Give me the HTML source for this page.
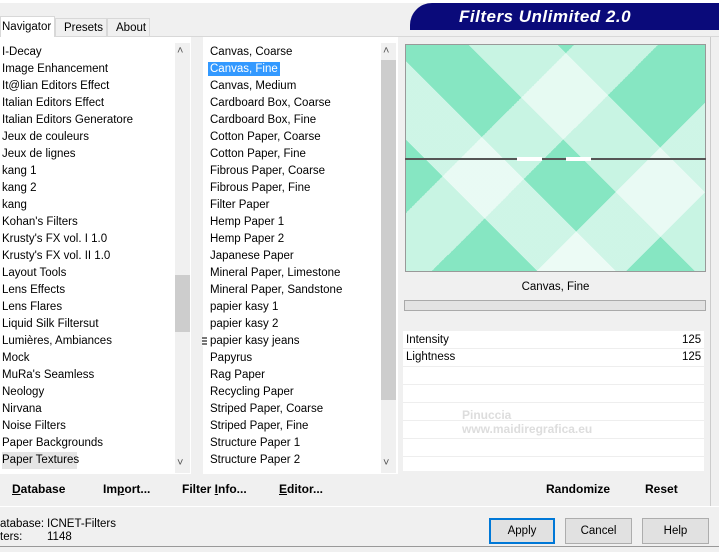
<!DOCTYPE html><html><head><style>
*{margin:0;padding:0;box-sizing:border-box}
body{width:719px;height:552px;background:#f0f0f0;font-family:"Liberation Sans",sans-serif;font-size:11.5px;color:#000;position:relative;overflow:hidden}
.a{position:absolute}
.list div{height:17px;line-height:17px;white-space:nowrap}
.sb{background:#f0f0f0}
.btn{font-weight:bold;font-size:12px}
</style></head><body>
<div class="a" style="left:0;top:0;width:719px;height:3px;background:#fff"></div>
<div class="a" style="left:410px;top:3px;width:309px;height:27px;background:#0a0a7a;border-radius:22px 0 0 0"></div>
<div class="a" style="left:459px;top:7px;color:#fff;font-weight:bold;font-style:italic;font-size:17px;letter-spacing:0.5px">Filters Unlimited 2.0</div>
<div class="a" style="left:0;top:36px;width:719px;height:1px;background:#d8d8d8"></div>
<div class="a" style="left:0;top:16px;width:55px;height:21px;background:#fff;border:1px solid #d8d8d8;border-bottom:none;padding:4px 0 0 1px">Navigator</div>
<div class="a" style="left:55px;top:18px;width:52px;height:19px;border:1px solid #d8d8d8;padding:3px 0 0 8px">Presets</div>
<div class="a" style="left:107px;top:18px;width:43px;height:19px;border:1px solid #d8d8d8;padding:3px 0 0 8px">About</div>
<div class="a" style="left:0;top:37px;width:719px;height:510px;background:#f0f0f0;border-bottom:1px solid #999"></div>
<div class="a" style="left:0;top:37px;width:398px;height:437px;background:#fff"></div>
<div class="a" style="left:191px;top:37px;width:12px;height:437px;background:#f0f0f0"></div>
<div class="a list" style="left:2px;top:44px">
<div>I-Decay</div><div>Image Enhancement</div><div>It@lian Editors Effect</div><div>Italian Editors Effect</div><div>Italian Editors Generatore</div><div>Jeux de couleurs</div><div>Jeux de lignes</div><div>kang 1</div><div>kang 2</div><div>kang</div><div>Kohan's Filters</div><div>Krusty's FX vol. I 1.0</div><div>Krusty's FX vol. II 1.0</div><div>Layout Tools</div><div>Lens Effects</div><div>Lens Flares</div><div>Liquid Silk Filtersut</div><div>Lumières, Ambiances</div><div>Mock</div><div>MuRa's Seamless</div><div>Neology</div><div>Nirvana</div><div>Noise Filters</div><div>Paper Backgrounds</div><div style="background:#e5e5e5;width:75px">Paper Textures</div>
</div>
<div class="a sb" style="left:175px;top:43px;width:15px;height:430px"></div>
<div class="a" style="left:175px;top:275px;width:15px;height:57px;background:#cdcdcd"></div>
<div class="a" style="left:177px;top:45px;font-size:11px;color:#555">˄</div>
<div class="a" style="left:177px;top:457px;font-size:11px;color:#555">˅</div>
<div class="a list" style="left:210px;top:44px">
<div>Canvas, Coarse</div><div><span style="background:#3399ff;color:#fff;padding:1px 2px;margin-left:-2px">Canvas, Fine</span></div><div>Canvas, Medium</div><div>Cardboard Box, Coarse</div><div>Cardboard Box, Fine</div><div>Cotton Paper, Coarse</div><div>Cotton Paper, Fine</div><div>Fibrous Paper, Coarse</div><div>Fibrous Paper, Fine</div><div>Filter Paper</div><div>Hemp Paper 1</div><div>Hemp Paper 2</div><div>Japanese Paper</div><div>Mineral Paper, Limestone</div><div>Mineral Paper, Sandstone</div><div>papier kasy 1</div><div>papier kasy 2</div><div>papier kasy jeans</div><div>Papyrus</div><div>Rag Paper</div><div>Recycling Paper</div><div>Striped Paper, Coarse</div><div>Striped Paper, Fine</div><div>Structure Paper 1</div><div>Structure Paper 2</div>
</div>
<div class="a" style="left:202px;top:337px;width:5px;height:9px;background:repeating-linear-gradient(#777 0 2px,#fff 2px 3px)"></div>
<div class="a sb" style="left:381px;top:43px;width:15px;height:430px"></div>
<div class="a" style="left:381px;top:60px;width:15px;height:340px;background:#cdcdcd"></div>
<div class="a" style="left:383px;top:45px;font-size:11px;color:#555">˄</div>
<div class="a" style="left:383px;top:457px;font-size:11px;color:#555">˅</div>
<div class="a" style="left:405px;top:44px;width:301px;height:228px;border:1px solid #999;background:
linear-gradient(45deg,transparent 25%,rgba(255,255,255,.6) 25% 40%,transparent 40% 55%,rgba(255,255,255,.55) 55% 72%,transparent 72%),
linear-gradient(-45deg,transparent 15%,rgba(255,255,255,.6) 15% 32%,transparent 32% 52%,rgba(255,255,255,.55) 52% 68%,transparent 68%),
#86e6c2"></div>
<div class="a" style="left:405px;top:158px;width:301px;height:2px;background:#555"></div>
<div class="a" style="left:517px;top:157px;width:25px;height:4px;background:#fff"></div>
<div class="a" style="left:566px;top:157px;width:25px;height:4px;background:#fff"></div>
<div class="a" style="left:405px;top:281px;width:301px;text-align:center">Canvas, Fine</div>
<div class="a" style="left:404px;top:300px;width:302px;height:11px;background:#e3e3e3;border:1px solid #aaa"></div>
<div class="a" style="left:403px;top:331px;width:301px;height:140px;background:#fff"></div>
<div class="a" style="left:406px;top:334px">Intensity</div><div class="a" style="left:682px;top:334px">125</div>
<div class="a" style="left:406px;top:351px">Lightness</div><div class="a" style="left:682px;top:351px">125</div>
<div class="a" style="left:403px;top:348px;width:301px;height:1px;background:#eee"></div>
<div class="a" style="left:403px;top:366px;width:301px;height:1px;background:#eee"></div>
<div class="a" style="left:403px;top:384px;width:301px;height:1px;background:#eee"></div>
<div class="a" style="left:403px;top:402px;width:301px;height:1px;background:#eee"></div>
<div class="a" style="left:403px;top:420px;width:301px;height:1px;background:#eee"></div>
<div class="a" style="left:403px;top:438px;width:301px;height:1px;background:#eee"></div>
<div class="a" style="left:403px;top:456px;width:301px;height:1px;background:#eee"></div>
<div class="a" style="left:462px;top:408px;color:#ddd;font-weight:bold;font-size:12px">Pinuccia<br>www.maidiregrafica.eu</div>
<div class="a" style="left:710px;top:37px;width:1px;height:470px;background:#ccc"></div>
<div class="a btn" style="left:12px;top:482px"><u>D</u>atabase</div>
<div class="a btn" style="left:103px;top:482px">Im<u>p</u>ort...</div>
<div class="a btn" style="left:182px;top:482px">Filter <u>I</u>nfo...</div>
<div class="a btn" style="left:279px;top:482px"><u>E</u>ditor...</div>
<div class="a btn" style="left:546px;top:482px">Randomize</div>
<div class="a btn" style="left:645px;top:482px">Reset</div>
<div class="a" style="left:0;top:506px;width:719px;height:1px;background:#fff"></div>
<div class="a" style="left:0;top:518px;line-height:13px">atabase:<br>ters:</div>
<div class="a" style="left:47px;top:518px;line-height:13px">ICNET-Filters<br>1148</div>
<div class="a" style="left:489px;top:518px;width:66px;height:26px;border:2px solid #0078d7;background:#e1e1e1;text-align:center;line-height:22px">Apply</div>
<div class="a" style="left:565px;top:518px;width:67px;height:26px;border:1px solid #adadad;background:#e1e1e1;text-align:center;line-height:24px">Cancel</div>
<div class="a" style="left:642px;top:518px;width:67px;height:26px;border:1px solid #adadad;background:#e1e1e1;text-align:center;line-height:24px">Help</div>
</body></html>
